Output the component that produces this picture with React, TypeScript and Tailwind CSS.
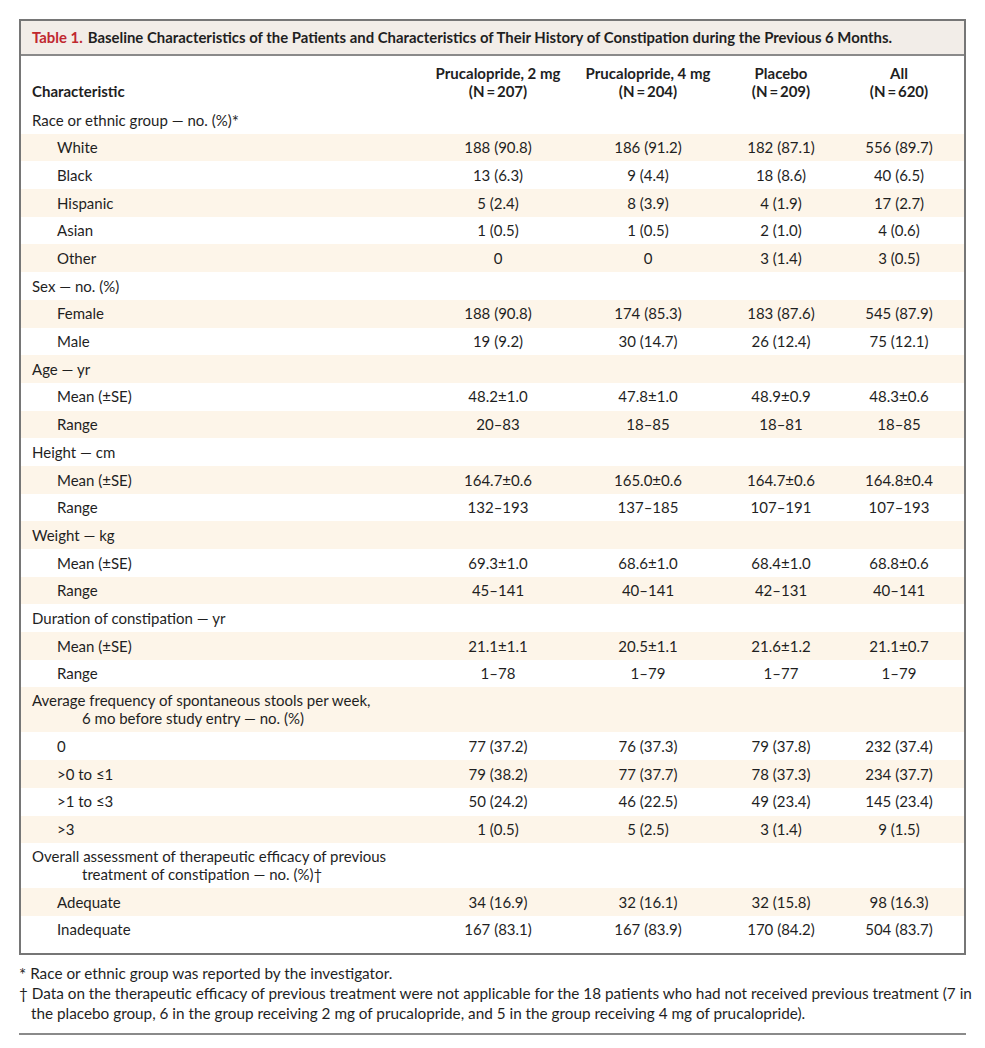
import React from "react";

type Row = { label: React.ReactNode; label2?: string; head?: boolean; v?: string[] };

const Ast = () => <span className="relative top-[2px] text-[17px] leading-none">*</span>;

const rows: Row[] = [
  {
    label: (
      <>
        Race or ethnic group — no. (%)
        <Ast />
      </>
    ),
    head: true,
  },
  { label: "White", v: ["188 (90.8)", "186 (91.2)", "182 (87.1)", "556 (89.7)"] },
  { label: "Black", v: ["13 (6.3)", "9 (4.4)", "18 (8.6)", "40 (6.5)"] },
  { label: "Hispanic", v: ["5 (2.4)", "8 (3.9)", "4 (1.9)", "17 (2.7)"] },
  { label: "Asian", v: ["1 (0.5)", "1 (0.5)", "2 (1.0)", "4 (0.6)"] },
  { label: "Other", v: ["0", "0", "3 (1.4)", "3 (0.5)"] },
  { label: "Sex — no. (%)", head: true },
  { label: "Female", v: ["188 (90.8)", "174 (85.3)", "183 (87.6)", "545 (87.9)"] },
  { label: "Male", v: ["19 (9.2)", "30 (14.7)", "26 (12.4)", "75 (12.1)"] },
  { label: "Age — yr", head: true },
  { label: "Mean (±SE)", v: ["48.2±1.0", "47.8±1.0", "48.9±0.9", "48.3±0.6"] },
  { label: "Range", v: ["20–83", "18–85", "18–81", "18–85"] },
  { label: "Height — cm", head: true },
  { label: "Mean (±SE)", v: ["164.7±0.6", "165.0±0.6", "164.7±0.6", "164.8±0.4"] },
  { label: "Range", v: ["132–193", "137–185", "107–191", "107–193"] },
  { label: "Weight — kg", head: true },
  { label: "Mean (±SE)", v: ["69.3±1.0", "68.6±1.0", "68.4±1.0", "68.8±0.6"] },
  { label: "Range", v: ["45–141", "40–141", "42–131", "40–141"] },
  { label: "Duration of constipation — yr", head: true },
  { label: "Mean (±SE)", v: ["21.1±1.1", "20.5±1.1", "21.6±1.2", "21.1±0.7"] },
  { label: "Range", v: ["1–78", "1–79", "1–77", "1–79"] },
  {
    label: "Average frequency of spontaneous stools per week,",
    label2: "6 mo before study entry — no. (%)",
    head: true,
  },
  { label: "0", v: ["77 (37.2)", "76 (37.3)", "79 (37.8)", "232 (37.4)"] },
  { label: ">0 to ≤1", v: ["79 (38.2)", "77 (37.7)", "78 (37.3)", "234 (37.7)"] },
  { label: ">1 to ≤3", v: ["50 (24.2)", "46 (22.5)", "49 (23.4)", "145 (23.4)"] },
  { label: ">3", v: ["1 (0.5)", "5 (2.5)", "3 (1.4)", "9 (1.5)"] },
  {
    label: "Overall assessment of therapeutic efficacy of previous",
    label2: "treatment of constipation — no. (%)†",
    head: true,
  },
  { label: "Adequate", v: ["34 (16.9)", "32 (16.1)", "32 (15.8)", "98 (16.3)"] },
  { label: "Inadequate", v: ["167 (83.1)", "167 (83.9)", "170 (84.2)", "504 (83.7)"] },
];

const grid = "grid grid-cols-[1fr_140px_160px_106px_130px]";

export default function App() {
  return (
    <div
      className="min-h-[1048px] w-[985px] bg-white pl-[19px] pt-[19px] text-[#1f1f1f]"
      style={{ fontFamily: "Lato, 'Open Sans', sans-serif" }}
    >
      <div className="w-[947px] border-2 border-[#767676]">
        <div className="flex h-[35px] items-center border-b-2 border-[#8a8a8a] bg-[#f2ede8] pl-[11px] text-[14.9px] font-bold">
          <span className="text-[#c0282f]">Table 1.</span>
          <span className="ml-[5px]">
            Baseline Characteristics of the Patients and Characteristics of Their History of Constipation during the
            Previous 6 Months.
          </span>
        </div>
        <div className={`${grid} h-[50px] items-end pb-[6px] text-[15px] font-bold leading-[18px]`}>
          <div className="pl-[11px]">Characteristic</div>
          <div className="text-center">
            Prucalopride, 2 mg
            <br />
            (N{"\u2009"}={"\u2009"}207)
          </div>
          <div className="text-center">
            Prucalopride, 4 mg
            <br />
            (N{"\u2009"}={"\u2009"}204)
          </div>
          <div className="text-center">
            Placebo
            <br />
            (N{"\u2009"}={"\u2009"}209)
          </div>
          <div className="text-center">
            All
            <br />
            (N{"\u2009"}={"\u2009"}620)
          </div>
        </div>
        <div className="pb-[9px] text-[15px]">
          {rows.map((r, i) => (
            <div
              key={i}
              className={`${grid} items-center ${i % 2 === 1 ? "bg-[#fdf5e9]" : "bg-white"} ${
                r.label2 ? "h-[45px] leading-[17.5px]" : "h-[27.7px]"
              }`}
            >
              <div className={r.head ? "pl-[11px]" : "pl-[36px]"}>
                {r.label}
                {r.label2 && <div className="pl-[50px]">{r.label2}</div>}
              </div>
              {(r.v ?? ["", "", "", ""]).map((c, j) => (
                <div key={j} className="text-center">
                  {c}
                </div>
              ))}
            </div>
          ))}
        </div>
      </div>
      <div className="mt-[8px] w-[966px] whitespace-nowrap text-[15.3px] leading-[20px]">
        <div>
          <Ast /> Race or ethnic group was reported by the investigator.
        </div>
        <div>
          † Data on the therapeutic efficacy of previous treatment were not applicable for the 18 patients who had not
          received previous treatment (7 in
        </div>
        <div className="pl-[12px]">
          the placebo group, 6 in the group receiving 2 mg of prucalopride, and 5 in the group receiving 4 mg of
          prucalopride).
        </div>
      </div>
      <div className="mt-[10px] h-[2px] w-[947px] bg-[#8a8a8a]" />
    </div>
  );
}
